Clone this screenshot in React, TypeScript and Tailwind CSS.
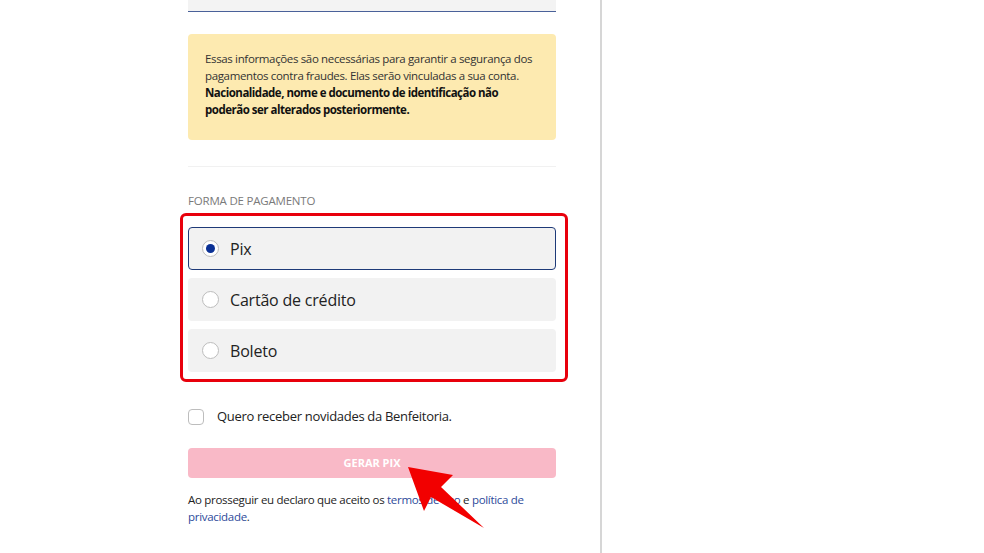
export default function App() {
  const methods = [
    { id: 'pix', label: 'Pix' },
    { id: 'card', label: 'Cartão de crédito' },
    { id: 'boleto', label: 'Boleto' },
  ]
  const selected = 'pix'

  return (
    <div className="relative flex h-[553px] w-[984px] overflow-hidden bg-white font-['Open_Sans',sans-serif] text-[#222]">
      {/* Checkout column */}
      <div className="w-[600px] shrink-0 pl-[188px] pr-[44px]">
        <div className="h-[12px] border-b border-[#4a6199] bg-[#f3f3f3]" />

        {/* Notice */}
        <div className="mt-[22px] rounded-[4px] bg-[#fdeab0] pl-[17px] pr-[14px] pt-[16px] pb-[22px] text-[11.5px] leading-[17px] tracking-[-0.35px] text-[#333]">
          Essas informações são necessárias para garantir a segurança dos pagamentos contra fraudes. Elas serão vinculadas a sua conta.{' '}
          <b className="font-bold tracking-[-0.5px] text-[#111]">Nacionalidade, nome e documento de identificação não poderão ser alterados posteriormente.</b>
        </div>

        <div className="mt-[26px] h-px bg-[#f1f1f1]" />

        <div className="mt-[25px] text-[11.5px] uppercase tracking-[-0.2px] text-[#7a7a7a]">Forma de pagamento</div>

        {/* Payment options */}
        <div className="relative mt-[18px] flex flex-col gap-[8px]">
          {methods.map((m) => {
            const active = m.id === selected
            return (
              <div
                key={m.id}
                className={
                  active
                    ? 'flex h-[43px] items-center rounded-[4px] border border-[#1e3a78] bg-[#f2f2f2] pl-[13px]'
                    : 'flex h-[43px] items-center rounded-[4px] border border-transparent bg-[#f2f2f2] pl-[13px]'
                }
              >
                <span className="flex h-[17px] w-[17px] items-center justify-center rounded-full border border-[#bdbdbd] bg-white">
                  {active && <span className="h-[9px] w-[9px] rounded-full bg-[#0b3195]" />}
                </span>
                <span className="ml-[11px] text-[16px] tracking-[-0.2px] text-[#222]">{m.label}</span>
              </div>
            )
          })}
          {/* annotation highlight */}
          <div className="pointer-events-none absolute -top-[14px] -bottom-[10px] -left-[8px] -right-[12px] rounded-[6px] border-[3px] border-[#e8000c]" />
        </div>

        {/* Newsletter */}
        <label className="mt-[35px] flex items-center">
          <span className="h-[16px] w-[16px] rounded-[4px] border border-[#bdbdbd] bg-white" />
          <span className="ml-[13px] text-[13px] tracking-[-0.3px] text-[#222]">Quero receber novidades da Benfeitoria.</span>
        </label>

        <button className="mt-[21px] flex h-[30px] w-full items-center justify-center rounded-[4px] bg-[#f9b9c7] text-[11px] font-bold text-white">
          GERAR PIX
        </button>

        <div className="mt-[13px] text-[11.5px] leading-[17px] tracking-[-0.3px] text-[#222]">
          <div>
            Ao prosseguir eu declaro que aceito os <span className="text-[#2d4a9a]">termos de uso</span> e{' '}
            <span className="text-[#2d4a9a]">política de</span>
          </div>
          <div>
            <span className="text-[#2d4a9a]">privacidade</span>.
          </div>
        </div>
      </div>

      {/* Sidebar divider */}
      <div className="h-full w-[2px] bg-[#d6d6d6]" />
      <div className="flex-1" />

      {/* annotation arrow */}
      <svg className="pointer-events-none absolute left-0 top-0" width="984" height="553" viewBox="0 0 984 553">
        <polygon points="408,467 453,475 441,487 484,528 431,497 424,511" fill="#f20000" />
      </svg>
    </div>
  )
}
